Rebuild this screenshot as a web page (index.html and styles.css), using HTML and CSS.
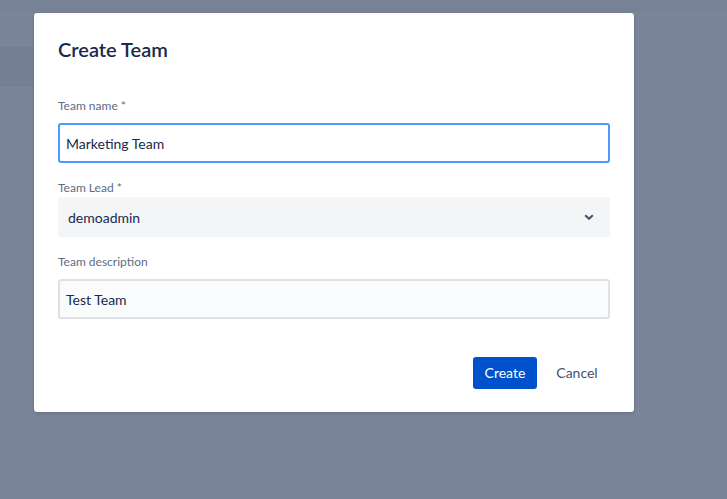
FILE: index.html
```html
<!DOCTYPE html>
<html>
<head>
<meta charset="utf-8">
<link rel="stylesheet" href="styles.css">
</head>
<body>
<div class="page">
  <div class="topbar"></div>
  <div class="band"></div>
</div>
<div class="blanket">
  <div class="modal">
    <h1 class="title">Create Team</h1>
    <div class="field first">
      <label class="label">Team name *</label>
      <div class="input focused">Marketing Team</div>
    </div>
    <div class="field lead">
      <label class="label">Team Lead *</label>
      <div class="select">
        <span>demoadmin</span>
        <svg class="chev" width="10" height="6" viewBox="0 0 10 6"><path d="M1.2 1.2 L5 4.8 L8.8 1.2" fill="none" stroke="#42526e" stroke-width="2"/></svg>
      </div>
    </div>
    <div class="field">
      <label class="label">Team description</label>
      <div class="input plain">Test Team</div>
    </div>
    <div class="footer">
      <button class="btn primary">Create</button>
      <button class="btn subtle">Cancel</button>
    </div>
  </div>
</div>
</body>
</html>
```
FILE: styles.css
```css
html, body {
  margin: 0;
  padding: 0;
  width: 727px;
  height: 499px;
  overflow: hidden;
  font-family: Lato, "Open Sans", sans-serif;
}
.page {
  height: 499px;
  background: #ffffff;
}
.topbar {
  height: 12px;
  background: #f8f9fa;
}
.band {
  margin-top: 35px;
  width: 320px;
  height: 40px;
  background: #f4f5f7;
}
.blanket {
  position: absolute;
  inset: 0;
  background: rgba(9, 30, 66, 0.54);
}
.modal {
  position: absolute;
  left: 34px;
  top: 13px;
  width: 600px;
  height: 399px;
  box-sizing: border-box;
  background: #ffffff;
  border-radius: 3px;
  box-shadow: 0 0 1px rgba(9, 30, 66, 0.31), 0 2px 4px -1px rgba(9, 30, 66, 0.2);
  padding: 24px 24px 0 24px;
}
.title {
  margin: 0;
  font-size: 20px;
  line-height: 24px;
  font-weight: 600;
  color: #172b4d;
}
.field {
  margin-top: 17px;
}
.field.first {
  margin-top: 37px;
}
.label {
  display: block;
  font-size: 12px;
  line-height: 16px;
  color: #5e6c84;
  margin-bottom: 9px;
}
.field.lead .label {
  margin-bottom: 1px;
}
.input, .select {
  box-sizing: border-box;
  height: 40px;
  border-radius: 3px;
  font-size: 14px;
  color: #172b4d;
  display: flex;
  align-items: center;
}
.input {
  padding: 0 6px;
  border: 2px solid #dfe1e6;
}
.input.focused {
  border-color: #4c9aff;
  background: #ffffff;
}
.input.plain {
  background: #fafbfc;
}
.select {
  background: #f4f5f7;
  padding: 0 16px 0 10px;
  justify-content: space-between;
}
.chev {
  display: block;
}
.footer {
  margin-top: 38px;
  padding-right: 1px;
  display: flex;
  justify-content: flex-end;
  gap: 8px;
}
.btn {
  height: 32px;
  border: none;
  border-radius: 3px;
  padding: 0;
  font-family: inherit;
  font-size: 14px;
  line-height: 32px;
  cursor: pointer;
  text-align: center;
}
.btn.primary {
  background: #0052cc;
  color: #ffffff;
  width: 64px;
}
.btn.subtle {
  background: transparent;
  color: #42526e;
  width: 64px;
}
```
